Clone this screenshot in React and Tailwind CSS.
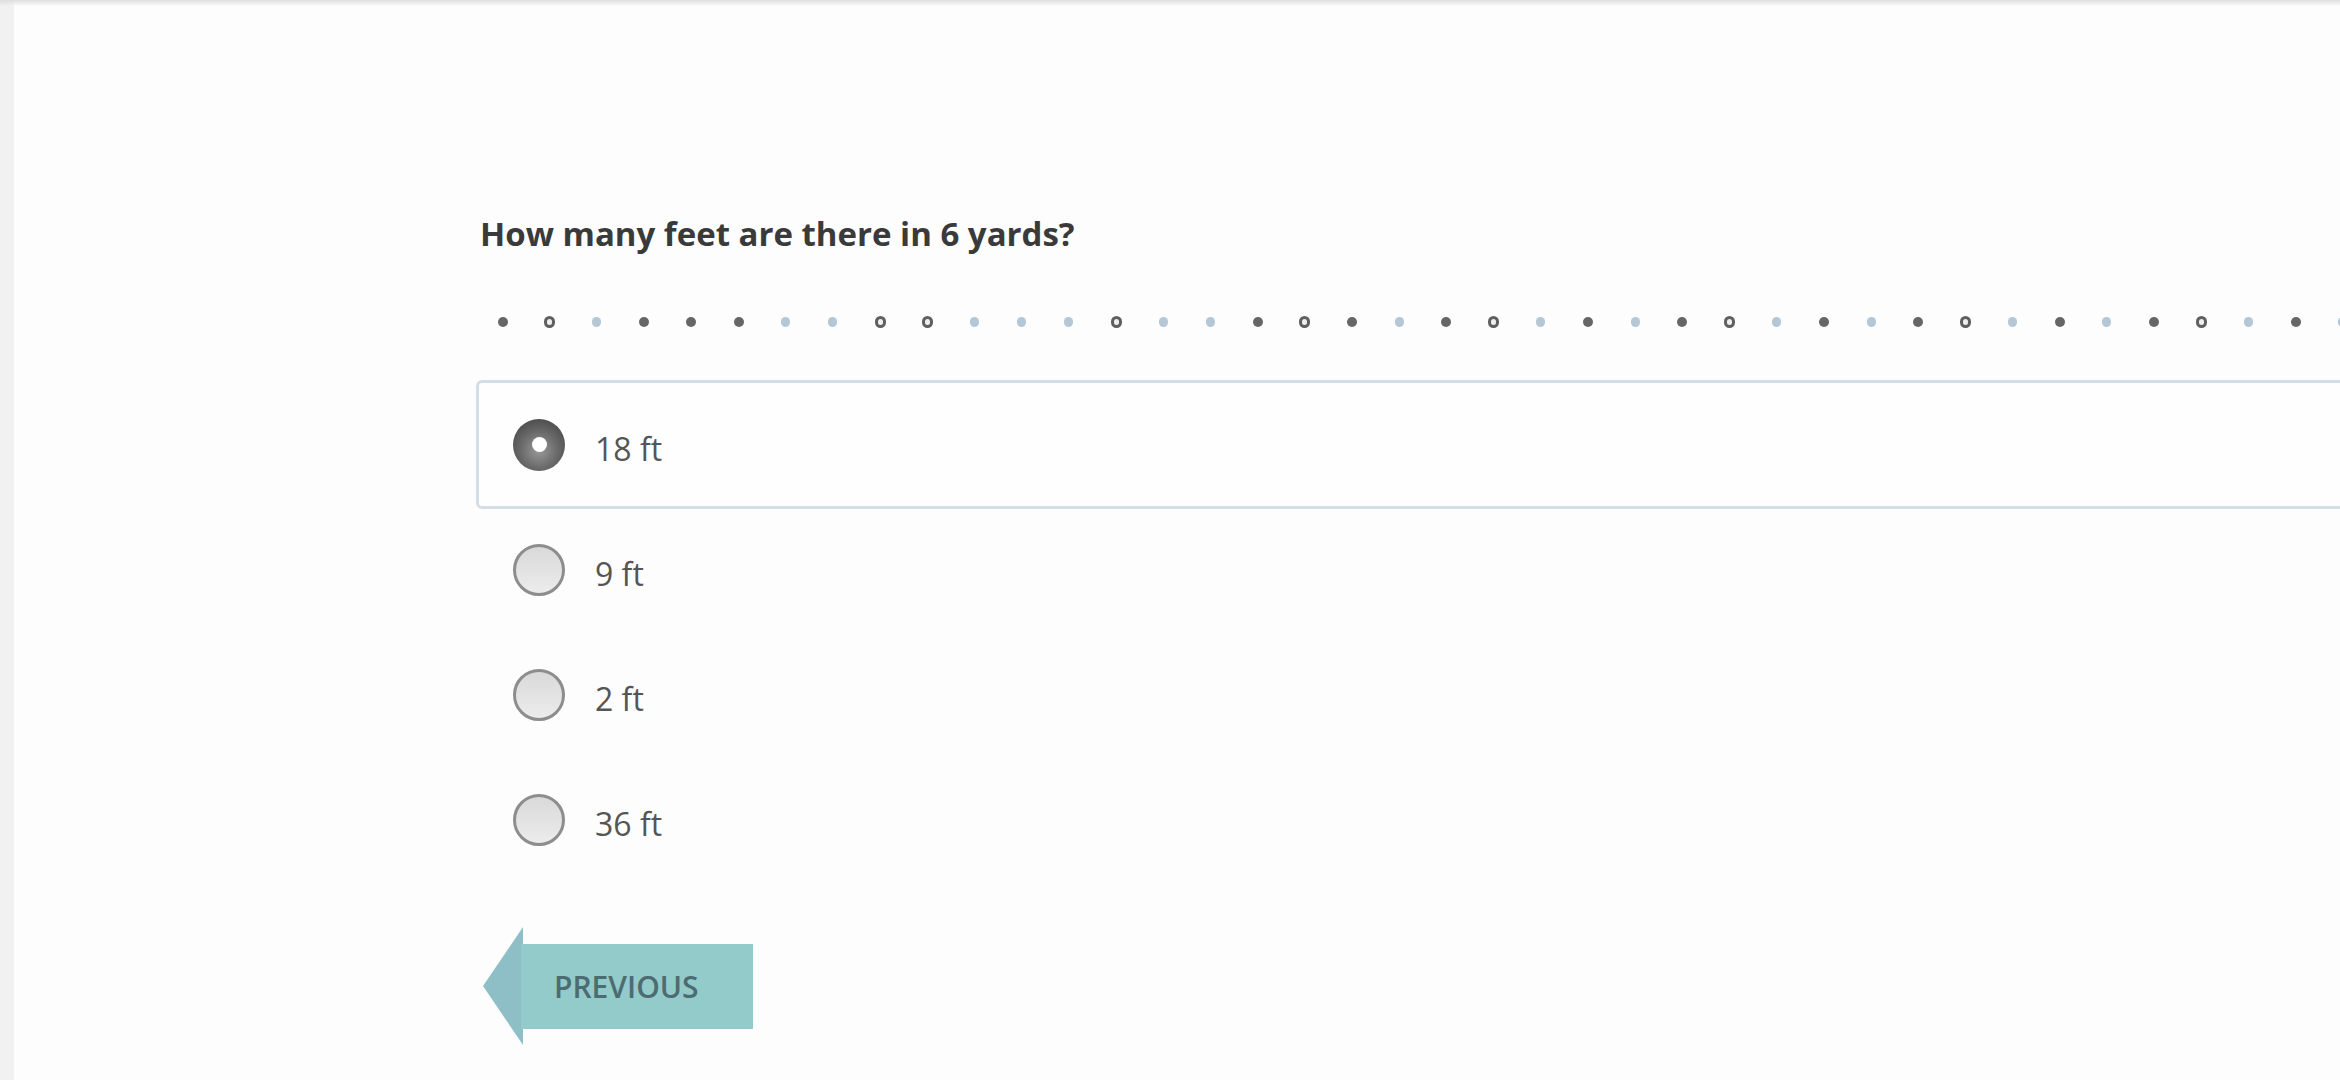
import React from 'react';

const dots = 'drldddllrrlllrlldrdldrldldrldldrldldrldl'.split('');

const Dot = ({ kind }) => {
    if (kind === 'r') {
        return <span className="block w-[11px] h-[12px] rounded-full border-[3px] border-[#5f5f5f] bg-[#efefef]" />;
    }
    if (kind === 'l') {
        return <span className="block w-[9px] h-[10px] rounded-full bg-[#b3c7d6]" />;
    }
    return <span className="block w-[10px] h-[10px] rounded-full bg-[#666]" />;
};

const Radio = ({ checked }) =>
    checked ? (
        <span className="flex items-center justify-center w-[52px] h-[52px] rounded-full bg-[radial-gradient(circle_at_50%_60%,#9a9a9a_0%,#6a6a6a_45%,#3a3a3a_100%)] shrink-0">
            <span className="block w-[15px] h-[15px] rounded-full bg-white" />
        </span>
    ) : (
        <span className="block w-[52px] h-[52px] rounded-full border-[3px] border-[#8d8d8d] bg-[linear-gradient(#d9d9d9,#ececec)] shrink-0" />
    );

const options = ['9 ft', '2 ft', '36 ft'];

const App = () => {
    return (
        <div className="relative flex w-full min-h-screen h-[1080px] overflow-hidden bg-[#fdfdfd] font-['Open_Sans',sans-serif]">
            <div className="absolute top-0 left-0 right-0 h-[6px] bg-gradient-to-b from-[#dedede] to-transparent" />
            <div className="w-[14px] shrink-0 bg-[#f1f1f1]" />

            <div className="shrink-0 w-[2600px] pl-[462px] pt-[211px]">
                <h1 className="h-[46px] leading-[46px] pl-[4px] text-[33px] font-bold text-[#3a3a3a]">
                    How many feet are there in 6 yards?
                </h1>

                <div className="flex items-center h-[20px] mt-[55px] pl-[3px]">
                    {dots.map((d, i) => (
                        <div key={i} className="w-[47.2px] shrink-0 flex justify-center">
                            <Dot kind={d} />
                        </div>
                    ))}
                </div>

                <div className="mt-[48px] h-[129px] flex items-center gap-[30px] pl-[34px] rounded-md border-[3px] border-[#d5dde5] bg-[#fefefe]">
                    <Radio checked />
                    <span className="text-[32px] text-[#555] mt-[8px]">18 ft</span>
                </div>

                <div className="-mt-[2px]">
                    {options.map(o => (
                        <div key={o} className="h-[125px] flex items-center gap-[30px] pl-[37px]">
                            <Radio />
                            <span className="text-[32px] text-[#555] mt-[8px]">{o}</span>
                        </div>
                    ))}
                </div>

                <div className="mt-[45px] ml-[7px] flex items-center">
                    <svg width="40" height="118" viewBox="0 0 40 118" className="shrink-0">
                        <polygon points="0,59 40,0 40,118" fill="#8fbfc6" />
                    </svg>
                    <button className="-ml-[2px] w-[232px] h-[85px] pl-[33px] text-left bg-[#92cbc9] text-[30px] font-semibold text-[#4c6c72] uppercase">
                        Previous
                    </button>
                </div>
            </div>
        </div>
    );
};

export default App;
